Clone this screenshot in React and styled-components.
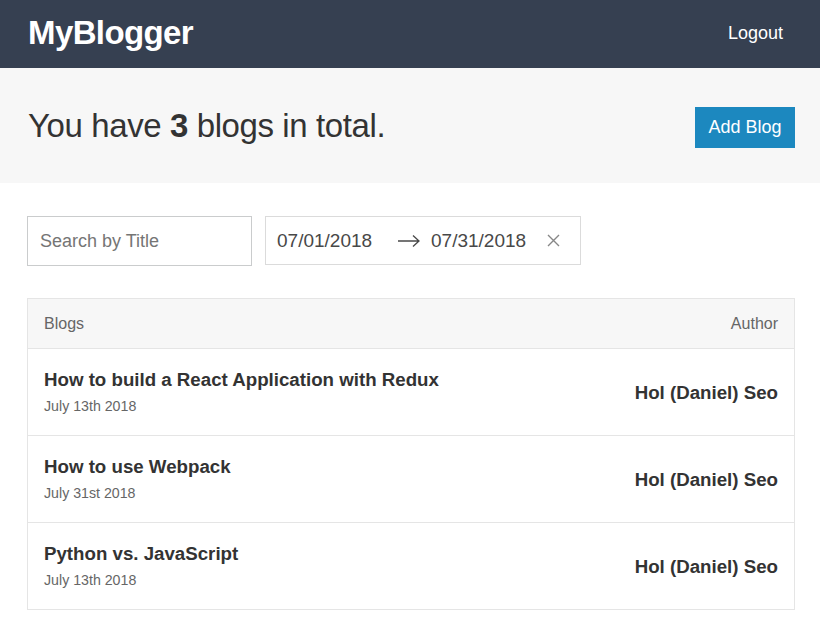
import React from "react";
import styled, { createGlobalStyle } from "styled-components";

const GlobalStyle = createGlobalStyle`
  * { box-sizing: border-box; }
  html, body { margin: 0; padding: 0; background: #fff; }
  body {
    font-family: "Liberation Sans", Arial, Helvetica, sans-serif;
    font-size: 16px;
    color: #333;
  }
`;

const Header = styled.header`
  background: #364051;
  height: 68px;
`;

const Container = styled.div`
  max-width: 800px;
  margin: 0 auto;
  padding: 0 15px 0 17px;
`;

const HeaderBar = styled(Container)`
  height: 100%;
  display: flex;
  align-items: center;
  justify-content: space-between;
`;

const Brand = styled.h1`
  margin: 0 0 3px 1px;
  color: #fff;
  font-size: 33px;
  font-weight: 700;
  letter-spacing: -0.6px;
`;

const LinkButton = styled.button`
  background: none;
  border: none;
  color: #fff;
  font-family: inherit;
  font-size: 18px;
  padding: 12px 12px 14px 12px;
  cursor: pointer;
`;

const PageHeader = styled.section`
  background: #f7f7f7;
  height: 115px;
  margin-bottom: 33px;
`;

const PageHeaderBar = styled(Container)`
  height: 100%;
  display: flex;
  align-items: center;
  justify-content: space-between;
`;

const PageTitle = styled.h2`
  margin: 0 0 0 1px;
  font-size: 33px;
  font-weight: 400;
  color: #333;
  letter-spacing: -0.4px;

  b { font-weight: 700; }
`;

const PrimaryButton = styled.button`
  background: #1c88bf;
  border: none;
  color: #fff;
  font-family: inherit;
  font-size: 18px;
  height: 41px;
  padding: 0 12px;
  width: 100px;
  margin-top: 3px;
`;

const Filters = styled.div`
  display: flex;
  align-items: flex-start;
  gap: 13px;
  margin-bottom: 32px;
`;

const SearchInput = styled.input`
  width: 225px;
  height: 50px;
  border: 1px solid #cacccd;
  padding: 0 12px;
  font-family: inherit;
  font-size: 18px;
  color: #333;
  outline: none;

  &::placeholder { color: #757575; }
`;

const RangeBox = styled.div`
  display: flex;
  align-items: center;
  height: 49px;
  width: 316px;
  border: 1px solid #dbdbdb;
  padding: 0 0 0 11px;
`;

const DateText = styled.span`
  font-size: 19px;
  color: #484848;
  width: ${(p) => p.$w}px;
`;

const Arrow = styled.svg`
  width: 24px;
  height: 24px;
  margin-right: 10px;
`;

const Clear = styled.svg`
  width: 13px;
  height: 13px;
  margin-left: 1px;
`;

const List = styled.div`
  border-bottom: 1px solid #e5e5e5;
`;

const ListHeader = styled.div`
  display: flex;
  justify-content: space-between;
  align-items: center;
  height: 51px;
  padding: 0 16px;
  background: #f7f7f7;
  border: 1px solid #e5e5e5;
  color: #666;
  font-size: 16px;
`;

const Item = styled.div`
  display: flex;
  justify-content: space-between;
  align-items: center;
  padding: 19px 16px 19px;
  border: 1px solid #e5e5e5;
  border-top: none;
  border-bottom: ${(p) => (p.$last ? "none" : "1px solid #e5e5e5")};
`;

const ItemTitle = styled.h3`
  margin: 0 0 4px;
  font-size: 18.7px;
  line-height: 24px;
  font-weight: 700;
  color: #333;
`;

const ItemDate = styled.div`
  font-size: 14.2px;
  line-height: 20px;
  color: #666;
`;

const ItemAuthor = styled.h3`
  margin: 2px 0 0;
  font-size: 18.7px;
  font-weight: 700;
  color: #333;
`;

const blogs = [
  { title: "How to build a React Application with Redux", date: "July 13th 2018" },
  { title: "How to use Webpack", date: "July 31st 2018" },
  { title: "Python vs. JavaScript", date: "July 13th 2018" },
];

const App = () => (
  <>
    <GlobalStyle />
    <Header>
      <HeaderBar>
        <Brand>MyBlogger</Brand>
        <LinkButton>Logout</LinkButton>
      </HeaderBar>
    </Header>
    <PageHeader>
      <PageHeaderBar>
        <PageTitle>
          You have <b>3</b> blogs in total.
        </PageTitle>
        <PrimaryButton>Add Blog</PrimaryButton>
      </PageHeaderBar>
    </PageHeader>
    <Container>
      <Filters>
        <SearchInput placeholder="Search by Title" />
        <RangeBox>
          <DateText $w={120}>07/01/2018</DateText>
          <Arrow viewBox="0 0 24 24">
            <path d="M1 12h21M16 6.5l6 5.5-6 5.5" fill="none" stroke="#484848" strokeWidth="1.3" />
          </Arrow>
          <DateText $w={115}>07/31/2018</DateText>
          <Clear viewBox="0 0 13 13">
            <path d="M1 1l11 11M12 1L1 12" stroke="#878787" strokeWidth="1.4" />
          </Clear>
        </RangeBox>
      </Filters>
      <List>
        <ListHeader>
          <span>Blogs</span>
          <span>Author</span>
        </ListHeader>
        {blogs.map((b, i) => (
          <Item key={i} $last={i === blogs.length - 1}>
            <div>
              <ItemTitle>{b.title}</ItemTitle>
              <ItemDate>{b.date}</ItemDate>
            </div>
            <ItemAuthor>Hol (Daniel) Seo</ItemAuthor>
          </Item>
        ))}
      </List>
    </Container>
  </>
);

export default App;
